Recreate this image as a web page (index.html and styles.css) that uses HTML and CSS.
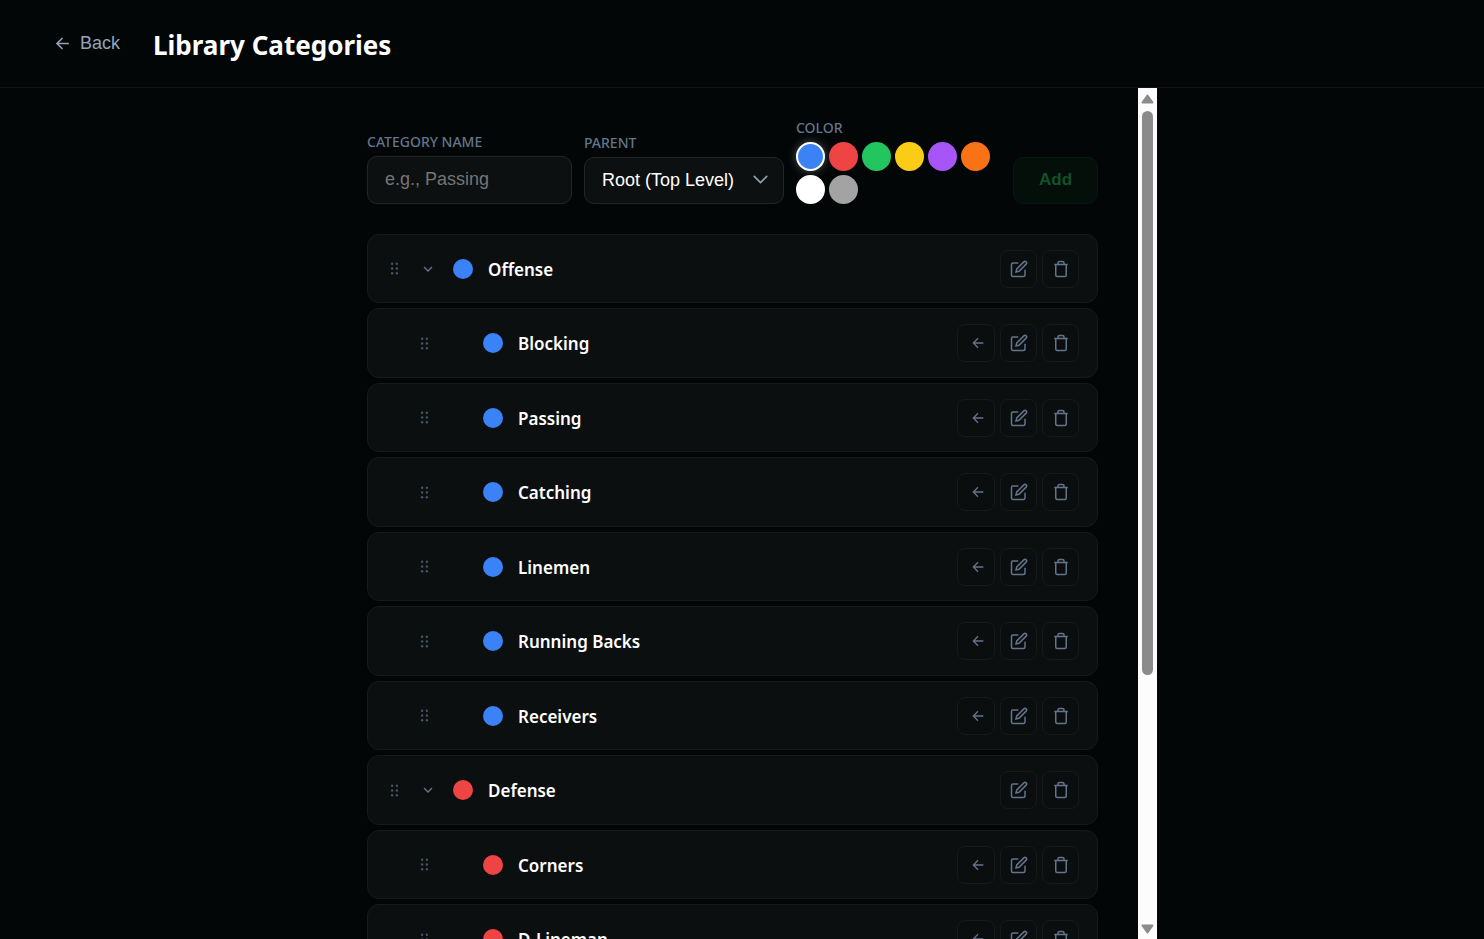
FILE: index.html
```html
<!DOCTYPE html>
<html lang="en">
<head>
    <meta charset="UTF-8">
    <meta name="viewport" content="width=device-width, initial-scale=1.0">
    <title>Library Categories</title>
    <link rel="stylesheet" href="styles.css">
</head>
<body>
    <svg class="sprite" aria-hidden="true">
        <symbol id="arrow" viewBox="0 0 24 24"><path d="M20 12H5M12 19l-7-7 7-7"/></symbol>
        <symbol id="outdent" viewBox="0 0 24 24"><path d="M20 12H5M12 19l-7-7 7-7"/></symbol>
        <symbol id="chevron" viewBox="0 0 24 24"><path d="M6 9l6 6 6-6"/></symbol>
        <symbol id="grip" viewBox="0 0 24 24">
            <circle cx="9" cy="6" r="1.5"/><circle cx="15" cy="6" r="1.5"/>
            <circle cx="9" cy="12" r="1.5"/><circle cx="15" cy="12" r="1.5"/>
            <circle cx="9" cy="18" r="1.5"/><circle cx="15" cy="18" r="1.5"/>
        </symbol>
        <symbol id="edit" viewBox="0 0 24 24">
            <path d="M11 4H4a2 2 0 0 0-2 2v14a2 2 0 0 0 2 2h14a2 2 0 0 0 2-2v-7"/>
            <path d="M18.5 2.5a2.12 2.12 0 0 1 3 3L12 15l-4 1 1-4z"/>
        </symbol>
        <symbol id="trash" viewBox="0 0 24 24">
            <path d="M3 6h18M19 6v14a2 2 0 0 1-2 2H7a2 2 0 0 1-2-2V6M8 6V4a2 2 0 0 1 2-2h4a2 2 0 0 1 2 2v2"/>
        </symbol>
    </svg>

    <header class="header">
        <button class="back-btn" type="button"><svg><use href="#arrow"/></svg>Back</button>
        <h1>Library Categories</h1>
    </header>

    <div class="scroll-area">
        <main class="content">
            <form class="add-form">
                <div class="form-group name-group">
                    <label for="categoryName">CATEGORY NAME</label>
                    <input type="text" id="categoryName" placeholder="e.g., Passing">
                </div>
                <div class="form-group parent-group">
                    <label for="parent">PARENT</label>
                    <div class="select-wrap">
                        <select id="parent">
                            <option>Root (Top Level)</option>
                            <option>Offense</option>
                            <option>Defense</option>
                        </select>
                        <svg><use href="#chevron"/></svg>
                    </div>
                </div>
                <div class="form-group color-group">
                    <span class="label" id="colorLabel">COLOR</span>
                    <div class="swatches" role="radiogroup" aria-labelledby="colorLabel">
                        <input type="radio" name="color" class="blue" aria-label="Blue" checked>
                        <input type="radio" name="color" class="red" aria-label="Red">
                        <input type="radio" name="color" class="green" aria-label="Green">
                        <input type="radio" name="color" class="yellow" aria-label="Yellow">
                        <input type="radio" name="color" class="purple" aria-label="Purple">
                        <input type="radio" name="color" class="orange" aria-label="Orange">
                        <input type="radio" name="color" class="white" aria-label="White">
                        <input type="radio" name="color" class="gray" aria-label="Gray">
                    </div>
                </div>
                <button class="add-btn" type="submit" disabled>Add</button>
            </form>

            <ul class="category-list">
                <li class="category">
                    <svg class="grip"><use href="#grip"/></svg>
                    <button class="toggle" type="button" aria-label="Collapse"><svg><use href="#chevron"/></svg></button>
                    <span class="dot blue"></span>
                    <span class="name">Offense</span>
                    <button class="icon-btn" type="button" aria-label="Edit"><svg><use href="#edit"/></svg></button>
                    <button class="icon-btn" type="button" aria-label="Delete"><svg><use href="#trash"/></svg></button>
                </li>
                <li class="category child">
                    <svg class="grip"><use href="#grip"/></svg>
                    <span class="toggle"></span>
                    <span class="dot blue"></span>
                    <span class="name">Blocking</span>
                    <button class="icon-btn outdent" type="button" aria-label="Move out"><svg><use href="#outdent"/></svg></button>
                    <button class="icon-btn" type="button" aria-label="Edit"><svg><use href="#edit"/></svg></button>
                    <button class="icon-btn" type="button" aria-label="Delete"><svg><use href="#trash"/></svg></button>
                </li>
                <li class="category child">
                    <svg class="grip"><use href="#grip"/></svg>
                    <span class="toggle"></span>
                    <span class="dot blue"></span>
                    <span class="name">Passing</span>
                    <button class="icon-btn outdent" type="button" aria-label="Move out"><svg><use href="#outdent"/></svg></button>
                    <button class="icon-btn" type="button" aria-label="Edit"><svg><use href="#edit"/></svg></button>
                    <button class="icon-btn" type="button" aria-label="Delete"><svg><use href="#trash"/></svg></button>
                </li>
                <li class="category child">
                    <svg class="grip"><use href="#grip"/></svg>
                    <span class="toggle"></span>
                    <span class="dot blue"></span>
                    <span class="name">Catching</span>
                    <button class="icon-btn outdent" type="button" aria-label="Move out"><svg><use href="#outdent"/></svg></button>
                    <button class="icon-btn" type="button" aria-label="Edit"><svg><use href="#edit"/></svg></button>
                    <button class="icon-btn" type="button" aria-label="Delete"><svg><use href="#trash"/></svg></button>
                </li>
                <li class="category child">
                    <svg class="grip"><use href="#grip"/></svg>
                    <span class="toggle"></span>
                    <span class="dot blue"></span>
                    <span class="name">Linemen</span>
                    <button class="icon-btn outdent" type="button" aria-label="Move out"><svg><use href="#outdent"/></svg></button>
                    <button class="icon-btn" type="button" aria-label="Edit"><svg><use href="#edit"/></svg></button>
                    <button class="icon-btn" type="button" aria-label="Delete"><svg><use href="#trash"/></svg></button>
                </li>
                <li class="category child">
                    <svg class="grip"><use href="#grip"/></svg>
                    <span class="toggle"></span>
                    <span class="dot blue"></span>
                    <span class="name">Running Backs</span>
                    <button class="icon-btn outdent" type="button" aria-label="Move out"><svg><use href="#outdent"/></svg></button>
                    <button class="icon-btn" type="button" aria-label="Edit"><svg><use href="#edit"/></svg></button>
                    <button class="icon-btn" type="button" aria-label="Delete"><svg><use href="#trash"/></svg></button>
                </li>
                <li class="category child">
                    <svg class="grip"><use href="#grip"/></svg>
                    <span class="toggle"></span>
                    <span class="dot blue"></span>
                    <span class="name">Receivers</span>
                    <button class="icon-btn outdent" type="button" aria-label="Move out"><svg><use href="#outdent"/></svg></button>
                    <button class="icon-btn" type="button" aria-label="Edit"><svg><use href="#edit"/></svg></button>
                    <button class="icon-btn" type="button" aria-label="Delete"><svg><use href="#trash"/></svg></button>
                </li>
                <li class="category">
                    <svg class="grip"><use href="#grip"/></svg>
                    <button class="toggle" type="button" aria-label="Collapse"><svg><use href="#chevron"/></svg></button>
                    <span class="dot red"></span>
                    <span class="name">Defense</span>
                    <button class="icon-btn" type="button" aria-label="Edit"><svg><use href="#edit"/></svg></button>
                    <button class="icon-btn" type="button" aria-label="Delete"><svg><use href="#trash"/></svg></button>
                </li>
                <li class="category child">
                    <svg class="grip"><use href="#grip"/></svg>
                    <span class="toggle"></span>
                    <span class="dot red"></span>
                    <span class="name">Corners</span>
                    <button class="icon-btn outdent" type="button" aria-label="Move out"><svg><use href="#outdent"/></svg></button>
                    <button class="icon-btn" type="button" aria-label="Edit"><svg><use href="#edit"/></svg></button>
                    <button class="icon-btn" type="button" aria-label="Delete"><svg><use href="#trash"/></svg></button>
                </li>
                <li class="category child">
                    <svg class="grip"><use href="#grip"/></svg>
                    <span class="toggle"></span>
                    <span class="dot red"></span>
                    <span class="name">D-Lineman</span>
                    <button class="icon-btn outdent" type="button" aria-label="Move out"><svg><use href="#outdent"/></svg></button>
                    <button class="icon-btn" type="button" aria-label="Edit"><svg><use href="#edit"/></svg></button>
                    <button class="icon-btn" type="button" aria-label="Delete"><svg><use href="#trash"/></svg></button>
                </li>
            </ul>
        </main>
        <div class="scrollbar" aria-hidden="true">
            <svg viewBox="0 0 19 23"><path d="M9.5 7.5L14.5 14.5H4.5z"/></svg>
            <div class="rail"><div class="thumb"></div></div>
            <svg viewBox="0 0 19 23"><path d="M9.5 16.5L14.5 9.5H4.5z"/></svg>
        </div>
    </div>
</body>
</html>
```
FILE: styles.css
```css
* {
    box-sizing: border-box;
}
body {
    margin: 0;
    height: 100vh;
    display: flex;
    flex-direction: column;
    overflow: hidden;
    background: #020606;
    color: #fff;
    font-family: "Noto Sans", sans-serif;
}
button, input, select {
    margin: 0;
    font-family: "Liberation Sans", Arial, sans-serif;
    font-size: 18px;
}
svg {
    fill: none;
    stroke: currentColor;
    stroke-width: 2;
    flex-shrink: 0;
}
.sprite {
    display: none;
}

/* Header */
.header {
    display: flex;
    align-items: center;
    gap: 33px;
    height: 88px;
    flex-shrink: 0;
    padding: 0 53px;
    border-bottom: 1px solid #121617;
}
.back-btn {
    display: flex;
    align-items: center;
    gap: 8px;
    padding: 0;
    border: none;
    background: none;
    color: #94a3b8;
    cursor: pointer;
}
.back-btn svg {
    width: 19px;
    height: 19px;
}
h1 {
    margin: 0;
    padding-top: 2px;
    font-size: 26px;
    line-height: 36px;
    font-weight: 700;
}

/* Scrolling column */
.scroll-area {
    display: flex;
    flex: 1;
    min-height: 0;
    width: 100%;
    max-width: 830px;
    margin: 0 auto;
}
.content {
    flex: 1;
    min-width: 0;
    padding: 31px 40px;
    overflow: hidden;
}
.scrollbar {
    display: flex;
    flex-direction: column;
    width: 19px;
    background: #fcfcfc;
}
.scrollbar svg {
    width: 19px;
    height: 23px;
    fill: #8b8b8b;
    stroke: #8b8b8b;
    stroke-linejoin: round;
}
.rail {
    flex: 1;
    padding: 0 4px;
}
.thumb {
    height: 70%;
    border-radius: 6px;
    background: #8b8b8b;
}

/* Add form */
.add-form {
    display: flex;
    align-items: flex-end;
    gap: 12px;
    margin-bottom: 30px;
}
.form-group {
    display: flex;
    flex-direction: column;
    gap: 5px;
}
.name-group {
    flex: 1;
    min-width: 0;
}
.parent-group {
    width: 200px;
}
.color-group {
    width: 205px;
}
label, .label {
    color: #64748b;
    font-size: 14px;
    line-height: 18px;
    font-weight: 500;
}
input[type="text"], select {
    width: 100%;
    height: 48px;
    padding: 0 17px 2px;
    border: 1px solid #222627;
    border-radius: 10px;
    background: #0c1011;
    color: #fff;
}
input::placeholder {
    color: #757575;
}
.select-wrap {
    position: relative;
}
select {
    display: block;
    height: 47px;
    appearance: none;
}
.select-wrap svg {
    position: absolute;
    right: 11px;
    top: 10px;
    width: 25px;
    height: 25px;
    color: #94a3b8;
    stroke-width: 1.5;
    stroke-linecap: round;
    pointer-events: none;
}
.swatches {
    display: flex;
    flex-wrap: wrap;
    gap: 4px;
}
.swatches input {
    appearance: none;
    width: 29px;
    height: 29px;
    border-radius: 50%;
    cursor: pointer;
}
.swatches input:checked {
    border: 2px solid #fff;
    box-shadow: 0 0 10px rgba(255, 255, 255, 0.3);
}
.blue { background: #3b82f6; }
.red { background: #ef4444; }
.green { background: #22c55e; }
.yellow { background: #facc15; }
.purple { background: #a855f7; }
.orange { background: #f97316; }
.white { background: #fff; }
.gray { background: #a3a3a3; }
.add-btn {
    width: 85px;
    height: 47px;
    padding: 0 0 2px;
    border: 1px solid #06190f;
    border-radius: 10px;
    background: #050f0a;
    color: #125129;
    font-size: 17px;
    font-weight: 700;
}

/* Category rows */
.category-list {
    display: flex;
    flex-direction: column;
    gap: 5px;
    margin: 0;
    padding: 0;
    list-style: none;
}
.category {
    display: flex;
    align-items: center;
    gap: 5px;
    height: 69px;
    padding: 0 18px 0 17px;
    border: 1px solid #161a1b;
    border-radius: 12px;
    background: #0b0f10;
}
.category:nth-child(even) {
    height: 70px;
}
.category.child {
    padding-left: 47px;
}
.grip {
    width: 19px;
    height: 19px;
    margin-right: 9px;
    color: #475569;
    fill: currentColor;
    stroke: none;
}
.toggle {
    display: flex;
    align-items: center;
    justify-content: center;
    width: 20px;
    height: 20px;
    padding: 0;
    border: none;
    background: none;
    color: #64748b;
}
.toggle svg {
    width: 16px;
    height: 16px;
}
.dot {
    width: 20px;
    height: 20px;
    margin-left: 10px;
    border-radius: 50%;
}
.name {
    flex: 1;
    margin-left: 10px;
    padding-top: 2px;
    font-size: 17px;
    line-height: 24px;
    font-weight: 600;
}
.icon-btn {
    display: flex;
    align-items: center;
    justify-content: center;
    width: 37px;
    height: 38px;
    padding: 0;
    border: 1px solid #161a1b;
    border-radius: 8px;
    background: #0a0e0f;
    color: #64748b;
    cursor: pointer;
}
.icon-btn svg {
    width: 18px;
    height: 18px;
}
.icon-btn.outdent {
    width: 38px;
    padding-left: 4px;
}
.icon-btn.outdent svg {
    width: 16px;
    height: 16px;
}
```
